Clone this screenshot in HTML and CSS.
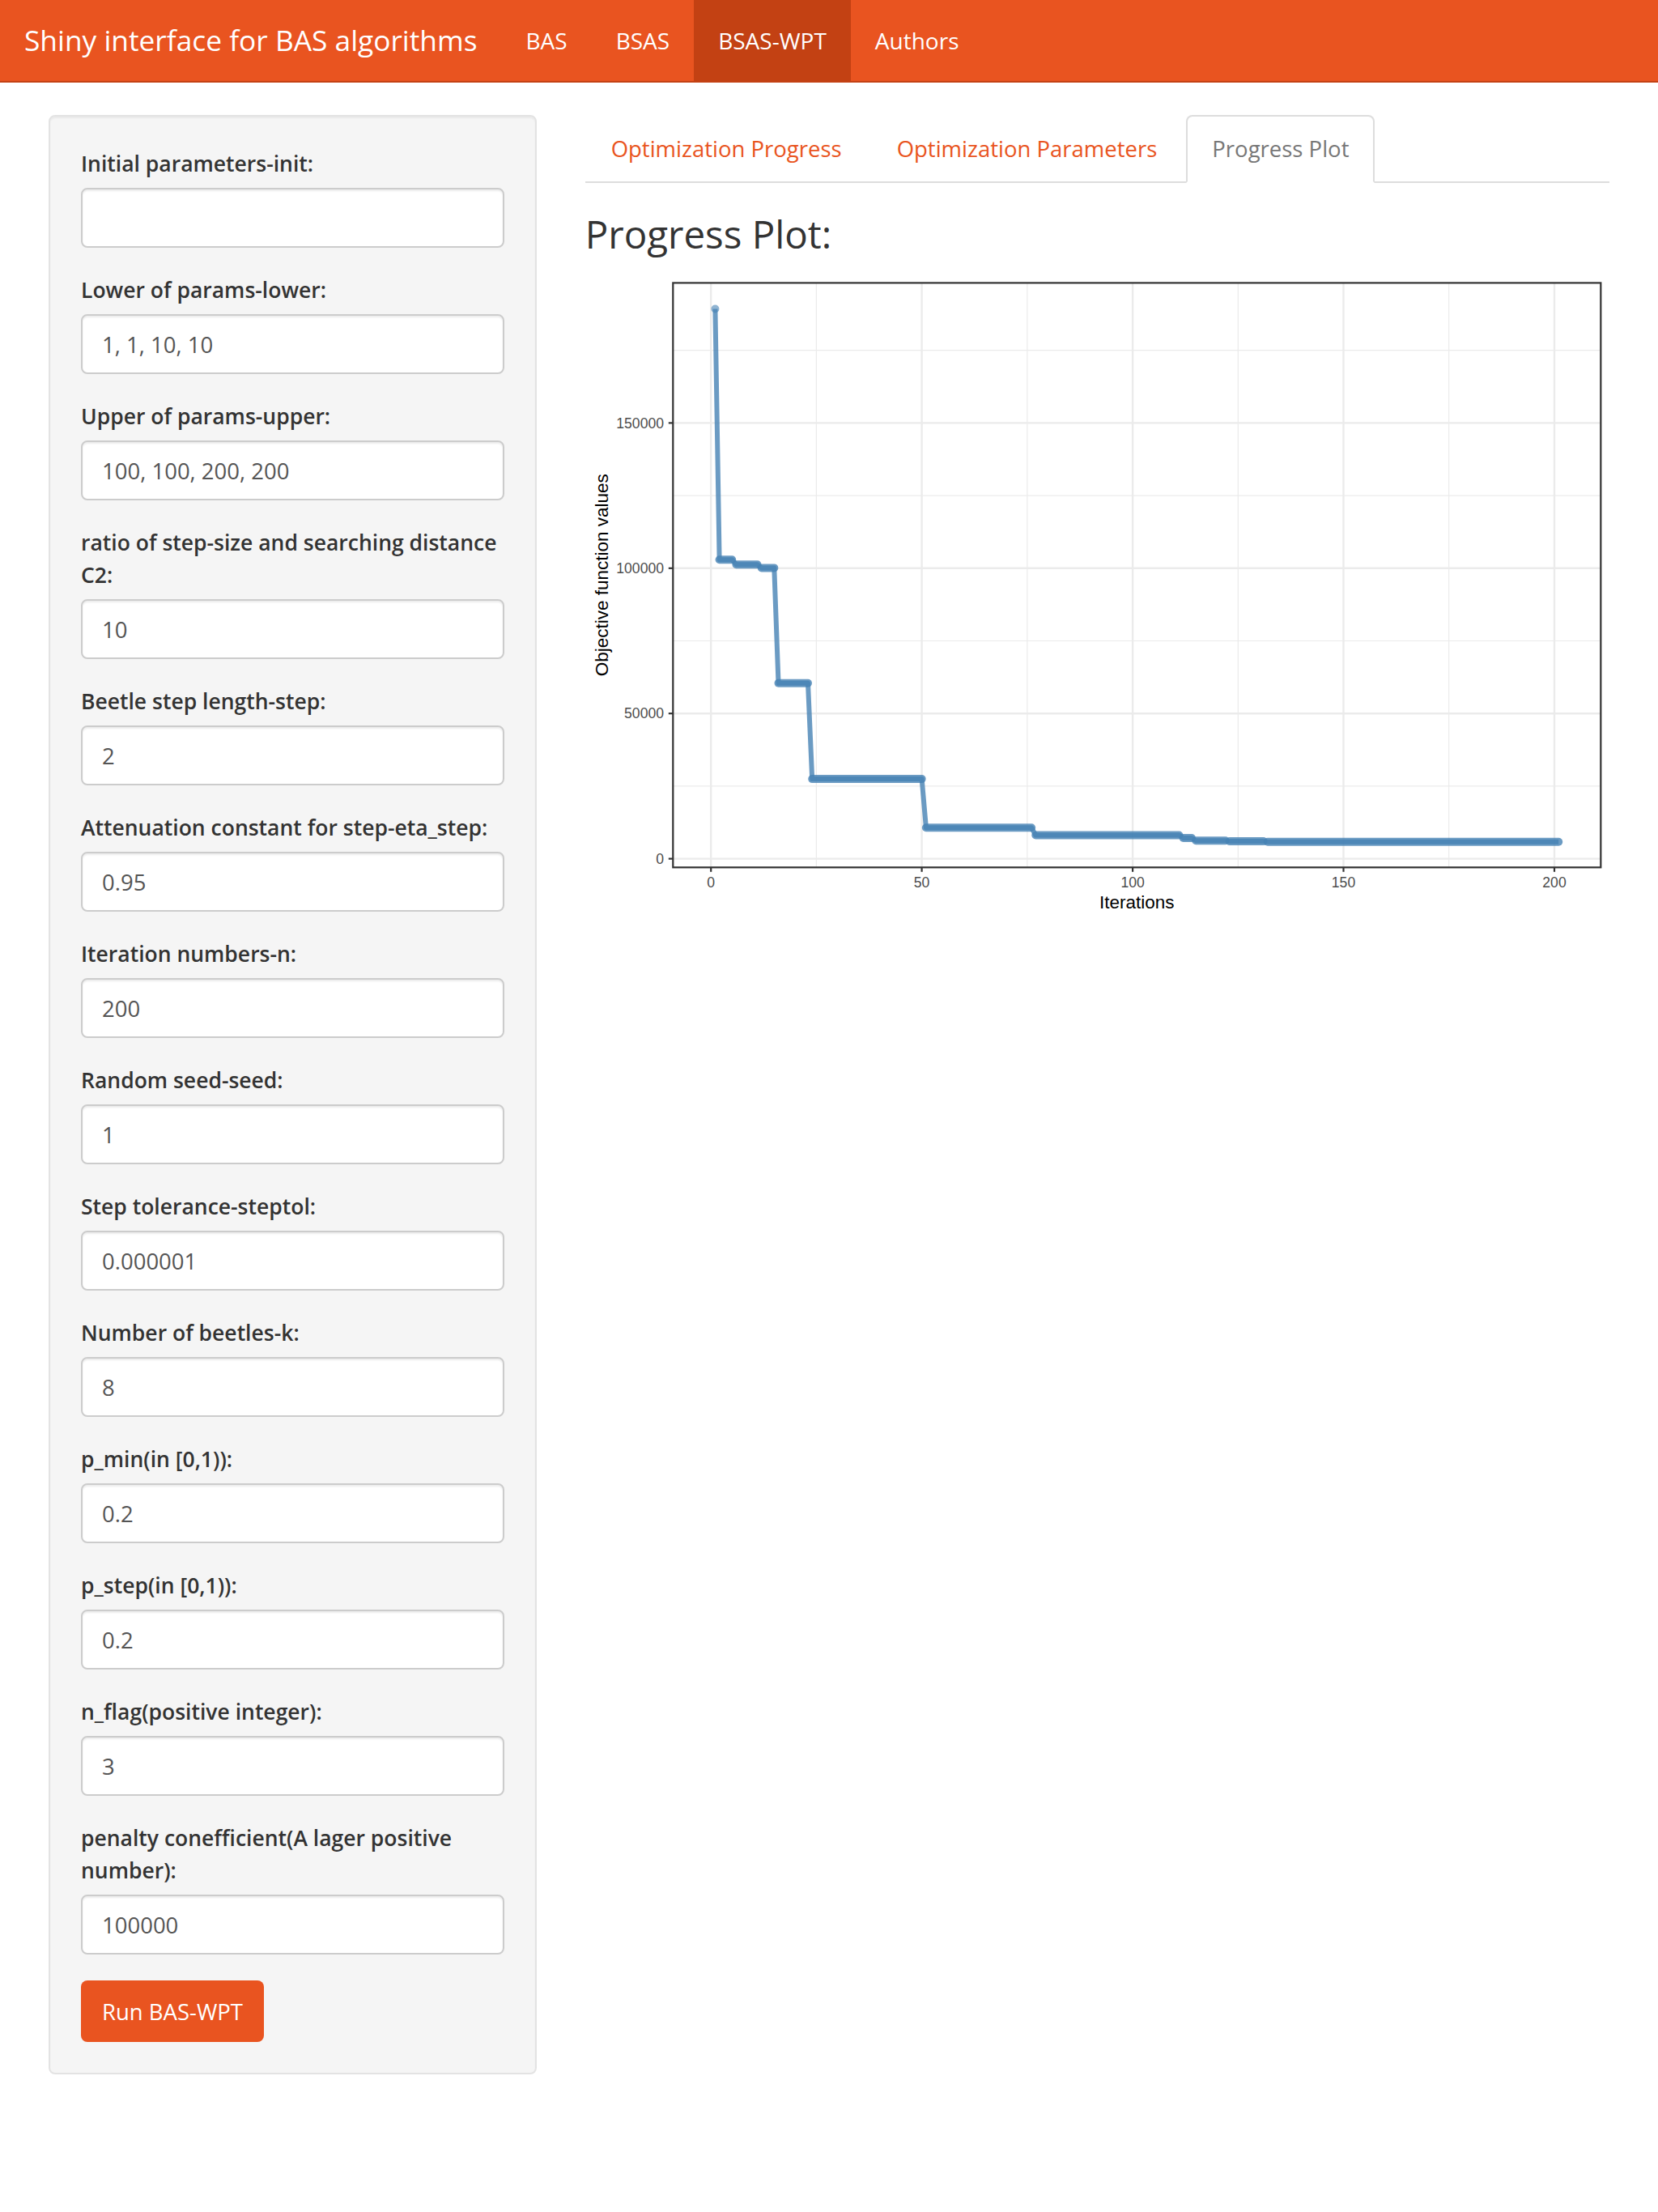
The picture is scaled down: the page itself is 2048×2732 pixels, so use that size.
FILE: index.html
```html
<!DOCTYPE html>
<html lang="en">
<head>
<meta charset="utf-8">
<title>Shiny interface for BAS algorithms</title>
<link rel="stylesheet" href="styles.css">
</head>
<body>
<nav class="navbar">
  <div class="brand">Shiny interface for BAS algorithms</div>
  <ul class="nav">
    <li><a href="#">BAS</a></li>
    <li><a href="#">BSAS</a></li>
    <li class="active"><a href="#">BSAS-WPT</a></li>
    <li><a href="#">Authors</a></li>
  </ul>
</nav>

<div class="layout">
  <div class="sidebar">
    <form class="well">
      <div class="form-group"><label>Initial parameters-init:</label><input class="form-control" type="text" value=""></div>
      <div class="form-group"><label>Lower of params-lower:</label><input class="form-control" type="text" value="1, 1, 10, 10"></div>
      <div class="form-group"><label>Upper of params-upper:</label><input class="form-control" type="text" value="100, 100, 200, 200"></div>
      <div class="form-group"><label>ratio of step-size and searching distance C2:</label><input class="form-control" type="text" value="10"></div>
      <div class="form-group"><label>Beetle step length-step:</label><input class="form-control" type="text" value="2"></div>
      <div class="form-group"><label>Attenuation constant for step-eta_step:</label><input class="form-control" type="text" value="0.95"></div>
      <div class="form-group"><label>Iteration numbers-n:</label><input class="form-control" type="text" value="200"></div>
      <div class="form-group"><label>Random seed-seed:</label><input class="form-control" type="text" value="1"></div>
      <div class="form-group"><label>Step tolerance-steptol:</label><input class="form-control" type="text" value="0.000001"></div>
      <div class="form-group"><label>Number of beetles-k:</label><input class="form-control" type="text" value="8"></div>
      <div class="form-group"><label>p_min(in [0,1)):</label><input class="form-control" type="text" value="0.2"></div>
      <div class="form-group"><label>p_step(in [0,1)):</label><input class="form-control" type="text" value="0.2"></div>
      <div class="form-group"><label>n_flag(positive integer):</label><input class="form-control" type="text" value="3"></div>
      <div class="form-group"><label>penalty conefficient(A lager positive number):</label><input class="form-control" type="text" value="100000"></div>
      <button class="btn" type="button">Run BAS-WPT</button>
    </form>
  </div>

  <div class="main">
    <ul class="tabs">
      <li><a href="#">Optimization Progress</a></li>
      <li><a href="#">Optimization Parameters</a></li>
      <li class="active"><a href="#">Progress Plot</a></li>
    </ul>
    <h3 class="plot-title">Progress Plot:</h3>
    <svg class="plot" viewBox="0 0 1265.33 800" preserveAspectRatio="none" xmlns="http://www.w3.org/2000/svg">
      <rect x="108.3" y="10.4" width="1146" height="721.9" fill="#ffffff"/>
      <g stroke="#ebebeb" stroke-width="1.2">
        <line x1="108.3" x2="1254.3" y1="631.9" y2="631.9"/>
        <line x1="108.3" x2="1254.3" y1="452.5" y2="452.5"/>
        <line x1="108.3" x2="1254.3" y1="273.1" y2="273.1"/>
        <line x1="108.3" x2="1254.3" y1="93.7" y2="93.7"/>
        <line x1="285.4" x2="285.4" y1="10.4" y2="732.3"/>
        <line x1="545.9" x2="545.9" y1="10.4" y2="732.3"/>
        <line x1="806.3" x2="806.3" y1="10.4" y2="732.3"/>
        <line x1="1066.7" x2="1066.7" y1="10.4" y2="732.3"/>
      </g>
      <g stroke="#ebebeb" stroke-width="2.4">
        <line x1="108.3" x2="1254.3" y1="721.6" y2="721.6"/>
        <line x1="108.3" x2="1254.3" y1="542.2" y2="542.2"/>
        <line x1="108.3" x2="1254.3" y1="362.8" y2="362.8"/>
        <line x1="108.3" x2="1254.3" y1="183.4" y2="183.4"/>
        <line x1="155.2" x2="155.2" y1="10.4" y2="732.3"/>
        <line x1="415.6" x2="415.6" y1="10.4" y2="732.3"/>
        <line x1="676.1" x2="676.1" y1="10.4" y2="732.3"/>
        <line x1="936.5" x2="936.5" y1="10.4" y2="732.3"/>
        <line x1="1197.0" x2="1197.0" y1="10.4" y2="732.3"/>
      </g>
      <path d="M160.4,42.5 L165.6,352.2 L181.2,352.2 L186.45,358.3 L212.5,358.3 L217.7,362.4 L233.3,362.4 L238.5,504.8 L275.0,504.8 L280.2,623.1 L415.65,623.1 L420.9,683.3 L551.1,683.3 L556.3,692.5 L733.4,692.5 L738.6,696.0 L749.0,696.0 L754.2,699.2 L790.7,699.2 L795.9,700.1 L837.6,700.1 L842.8,700.8 L1202.2,700.8" fill="none" stroke="#4682b4" stroke-opacity="0.8" stroke-width="6" stroke-linejoin="round"/>
      <g stroke="#4682b4" stroke-opacity="0.8" stroke-width="10" stroke-linecap="round">
        <line x1="165.6" x2="181.2" y1="352.2" y2="352.2"/>
        <line x1="186.45" x2="212.5" y1="358.3" y2="358.3"/>
        <line x1="217.7" x2="233.3" y1="362.4" y2="362.4"/>
        <line x1="238.5" x2="275.0" y1="504.8" y2="504.8"/>
        <line x1="280.2" x2="415.65" y1="623.1" y2="623.1"/>
        <line x1="420.9" x2="551.1" y1="683.3" y2="683.3"/>
        <line x1="556.3" x2="733.4" y1="692.5" y2="692.5"/>
        <line x1="738.6" x2="749.0" y1="696.0" y2="696.0"/>
        <line x1="754.2" x2="790.7" y1="699.2" y2="699.2"/>
        <line x1="795.9" x2="837.6" y1="700.1" y2="700.1"/>
        <line x1="842.8" x2="1202.2" y1="700.8" y2="700.8"/>
      </g>
      <circle cx="160.4" cy="42.5" r="5" fill="#4682b4" fill-opacity="0.6"/>
      <rect x="108.3" y="10.4" width="1146" height="721.9" fill="none" stroke="#333333" stroke-width="2.2"/>
      <g stroke="#333333" stroke-width="2.2">
        <line x1="102.8" x2="108.3" y1="721.6" y2="721.6"/>
        <line x1="102.8" x2="108.3" y1="542.2" y2="542.2"/>
        <line x1="102.8" x2="108.3" y1="362.8" y2="362.8"/>
        <line x1="102.8" x2="108.3" y1="183.4" y2="183.4"/>
        <line x1="155.2" x2="155.2" y1="732.3" y2="737.8"/>
        <line x1="415.6" x2="415.6" y1="732.3" y2="737.8"/>
        <line x1="676.1" x2="676.1" y1="732.3" y2="737.8"/>
        <line x1="936.5" x2="936.5" y1="732.3" y2="737.8"/>
        <line x1="1197.0" x2="1197.0" y1="732.3" y2="737.8"/>
      </g>
      <g class="tick" text-anchor="end">
        <text x="97" y="727.9">0</text>
        <text x="97" y="548.5">50000</text>
        <text x="97" y="369.1">100000</text>
        <text x="97" y="189.7">150000</text>
      </g>
      <g class="tick" text-anchor="middle">
        <text x="155.2" y="756.6">0</text>
        <text x="415.6" y="756.6">50</text>
        <text x="676.1" y="756.6">100</text>
        <text x="936.5" y="756.6">150</text>
        <text x="1197.0" y="756.6">200</text>
      </g>
      <text class="axis-title" x="681.3" y="783.2" text-anchor="middle">Iterations</text>
      <text class="axis-title" text-anchor="middle" transform="translate(27.8,371.3) rotate(-90)">Objective function values</text>
    </svg>
  </div>
</div>
</body>
</html>
```

FILE: styles.css
```css
* {
  box-sizing: border-box;
}

html, body {
  margin: 0;
  padding: 0;
  background: #ffffff;
}

body {
  font-family: "Open Sans", "Noto Sans", sans-serif;
  font-size: 27.5px;
  line-height: 40px;
  color: #333333;
  min-height: 2732px;
}

/* ---------- navbar ---------- */
.navbar {
  display: flex;
  height: 102px;
  background: #e95420;
  border-bottom: 2px solid #c34113;
  margin-bottom: 40px;
}

.brand {
  padding: 0 30px;
  line-height: 98px;
  font-size: 35.3px;
  color: #ffffff;
}

.nav {
  display: flex;
  list-style: none;
  margin: 0;
  padding: 0;
}

.nav a {
  display: block;
  padding: 0 30px;
  line-height: 100px;
  font-size: 28px;
  color: #ffffff;
  text-decoration: none;
}

.nav .active a {
  background: #c34113;
}

/* ---------- layout ---------- */
.layout {
  display: grid;
  grid-template-columns: 1fr 2fr;
  padding: 0 30px;
}

.sidebar,
.main {
  padding: 0 30px;
  min-width: 0;
}

/* ---------- sidebar well ---------- */
.well {
  margin: 0;
  background: #f5f5f5;
  border: 2px solid #e3e3e3;
  border-radius: 8px;
  padding: 38px;
  box-shadow: inset 0 2px 2px rgba(0, 0, 0, 0.05);
}

.form-group {
  margin-bottom: 32px;
}

.form-group label {
  display: block;
  font-weight: 600;
  font-size: 26.5px;
  line-height: 40px;
  margin-bottom: 10px;
  color: #333333;
}

.form-control {
  display: block;
  width: 100%;
  height: 74px;
  padding: 0 24px;
  font-family: "Open Sans", "Noto Sans", sans-serif;
  font-size: 27.5px;
  color: #555555;
  background: #ffffff;
  border: 2px solid #cccccc;
  border-radius: 8px;
  box-shadow: inset 0 2px 2px rgba(0, 0, 0, 0.075);
  outline: none;
}

.btn {
  display: inline-block;
  height: 76px;
  padding: 0 24px;
  font-family: "Open Sans", "Noto Sans", sans-serif;
  font-size: 27.5px;
  color: #ffffff;
  background: #e95420;
  border: 2px solid transparent;
  border-radius: 8px;
}

/* ---------- tabs ---------- */
.tabs {
  display: flex;
  list-style: none;
  margin: 0;
  padding: 0;
  border-bottom: 2px solid #dddddd;
}

.tabs li {
  margin-bottom: -2px;
  margin-right: 4px;
}

.tabs a {
  display: block;
  padding: 20px 30px;
  line-height: 40px;
  border: 2px solid transparent;
  border-radius: 8px 8px 0 0;
  color: #e95420;
  text-decoration: none;
}

.tabs .active a {
  color: #777777;
  background: #ffffff;
  border-color: #dddddd;
  border-bottom-color: transparent;
}

.plot-title {
  margin: 37px 0 23px;
  font-size: 47.5px;
  font-weight: 400;
  line-height: 52.8px;
  color: #333333;
}

/* ---------- plot ---------- */
.plot {
  display: block;
  width: 100%;
  height: 800px;
}

.tick {
  font-family: "Liberation Sans", Arial, sans-serif;
  font-size: 17.6px;
  fill: #4d4d4d;
}

.axis-title {
  font-family: "Liberation Sans", Arial, sans-serif;
  font-size: 22.5px;
  fill: #000000;
}
```
